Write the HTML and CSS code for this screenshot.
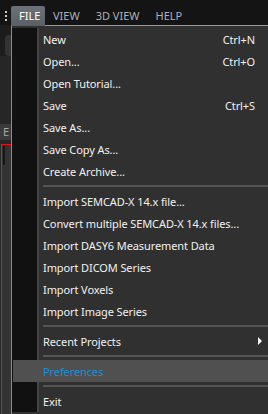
FILE: index.html
```html
<!DOCTYPE html>
<html lang="en">
<head>
    <meta charset="UTF-8">
    <title>File menu</title>
    <link rel="stylesheet" href="styles.css">
</head>
<body>
    <div class="menubar">
        <div class="grip"><span></span><span></span><span></span></div>
        <a class="tab active">FILE</a>
        <a class="tab">VIEW</a>
        <a class="tab">3D VIEW</a>
        <a class="tab">HELP</a>
    </div>

    <div class="workspace">
        <div class="side">
            <div class="side-top"><div class="pill"></div></div>
            <div class="side-mid"></div>
            <div class="side-tab">E</div>
            <div class="side-gap"></div>
            <div class="side-frame">
                <div class="frame-inner"><div class="frame-dark"></div></div>
            </div>
        </div>

        <div class="menu">
            <div class="menu-body">
                <div class="item"><span>New</span><span class="key">Ctrl+N</span></div>
                <div class="item"><span>Open...</span><span class="key">Ctrl+O</span></div>
                <div class="item"><span>Open Tutorial...</span></div>
                <div class="item"><span>Save</span><span class="key">Ctrl+S</span></div>
                <div class="item"><span>Save As...</span></div>
                <div class="item"><span>Save Copy As...</span></div>
                <div class="item"><span>Create Archive...</span></div>
                <div class="sep"></div>
                <div class="item"><span>Import SEMCAD-X 14.x file...</span></div>
                <div class="item"><span>Convert multiple SEMCAD-X 14.x files...</span></div>
                <div class="item"><span>Import DASY6 Measurement Data</span></div>
                <div class="item"><span>Import DICOM Series</span></div>
                <div class="item"><span>Import Voxels</span></div>
                <div class="item"><span>Import Image Series</span></div>
                <div class="sep"></div>
                <div class="item"><span>Recent Projects</span><span class="arrow"></span></div>
                <div class="sep"></div>
                <div class="item hover"><span>Preferences</span></div>
                <div class="sep"></div>
                <div class="item"><span>Exit</span></div>
            </div>
        </div>
    </div>
</body>
</html>
```

FILE: styles.css
```css
body {
    margin: 0;
    background-color: #1e1e1e;
    font-family: 'Noto Sans', 'Open Sans', sans-serif;
    width: 268px;
    height: 414px;
    overflow: hidden;
}
.menubar {
    display: flex;
    align-items: flex-end;
    height: 25px;
    background-color: #141414;
}
.grip {
    width: 11px;
    height: 25px;
    display: flex;
    flex-direction: column;
    align-items: center;
    padding-top: 11px;
    box-sizing: border-box;
    gap: 2px;
}
.grip span {
    width: 2px;
    height: 2px;
    background-color: #c8c8c8;
}
.tab {
    height: 19px;
    line-height: 19px;
    padding: 0 8px;
    font-size: 11px;
    color: #a9b0bb;
}
.tab.active {
    width: 34px;
    box-sizing: border-box;
    color: #ffffff;
    background: linear-gradient(#6c727a, #5a5f66);
    border-radius: 2px 2px 0 0;
    position: relative;
    z-index: 1;
    margin-bottom: -1px;
    height: 20px;
}
.workspace {
    display: flex;
    height: 389px;
}
.side {
    width: 11px;
    display: flex;
    flex-direction: column;
}
.side-top {
    height: 31px;
    background-color: #1c1c1c;
    padding-top: 10px;
    box-sizing: border-box;
}
.pill {
    margin-left: 5px;
    height: 21px;
    background-color: #333;
    border-radius: 4px 0 0 4px;
}
.side-mid {
    height: 68px;
    background-color: #262626;
}
.side-tab {
    height: 16px;
    background-color: #3a3a3a;
    color: #a8a8a8;
    font-size: 11px;
    line-height: 16px;
    padding-left: 3px;
    overflow: hidden;
}
.side-gap {
    height: 4px;
    background-color: #262626;
}
.side-frame {
    flex: 1;
    background-color: #2a2a2a;
    padding-left: 1px;
    display: flex;
}
.frame-inner {
    flex: 1;
    border-left: 1px solid #e0141e;
    border-top: 1px solid #e0141e;
    background-color: #333;
    padding-left: 1px;
}
.frame-dark {
    width: 2px;
    height: 20px;
    background-color: #161616;
}
.menu {
    flex: 1;
    border-left: 1px solid #8c8c8c;
    border-top: 1px solid #9a9a9a;
    background-color: #303030;
    padding-top: 2px;
}
.menu-body {
    background: linear-gradient(to right, #111 0, #111 25px, #454545 25px, #454545 27px, #303030 27px);
    height: 384px;
}
.item {
    display: flex;
    justify-content: space-between;
    align-items: center;
    height: 22px;
    padding: 0 13px 0 31px;
    font-size: 11px;
    letter-spacing: -0.1px;
    color: #f0f0f0;
    white-space: nowrap;
}
.item.hover {
    background-color: #505050;
    color: #1a8fd0;
    margin-left: 1px;
    padding-left: 30px;
}
.key {
    color: #f0f0f0;
}
.arrow {
    width: 0;
    height: 0;
    border-top: 4px solid transparent;
    border-bottom: 4px solid transparent;
    border-left: 4px solid #fff;
    margin-right: -7px;
}
.sep {
    height: 8px;
    margin-left: 31px;
    display: flex;
    align-items: center;
}
.sep::before {
    content: "";
    flex: 1;
    height: 2px;
    background-color: #555;
}
```
